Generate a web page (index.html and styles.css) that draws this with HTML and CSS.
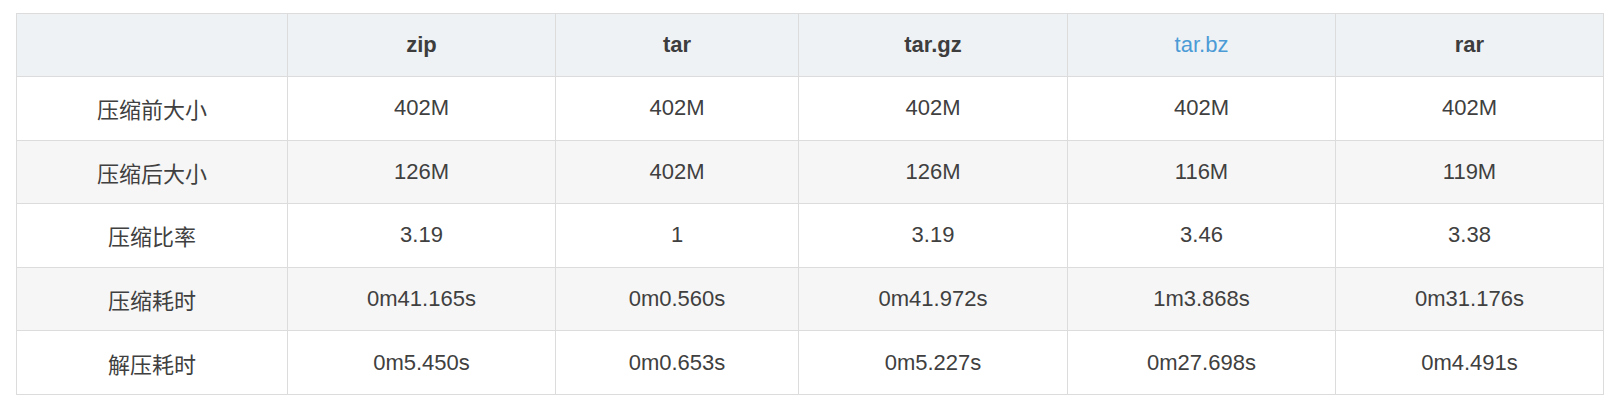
FILE: index.html
```html
<!DOCTYPE html>
<html lang="zh">
<head>
<meta charset="utf-8">
<link rel="stylesheet" href="styles.css">
</head>
<body>
<div class="wrap">
<table class="cmp">
  <colgroup>
    <col class="c1"><col class="c2"><col class="c3"><col class="c4"><col class="c5"><col class="c6">
  </colgroup>
  <thead>
    <tr><th></th><th>zip</th><th>tar</th><th>tar.gz</th><th><a class="lnk" href="#">tar.bz</a></th><th>rar</th></tr>
  </thead>
  <tbody>
    <tr><td>压缩前大小</td><td>402M</td><td>402M</td><td>402M</td><td>402M</td><td>402M</td></tr>
    <tr><td>压缩后大小</td><td>126M</td><td>402M</td><td>126M</td><td>116M</td><td>119M</td></tr>
    <tr><td>压缩比率</td><td>3.19</td><td>1</td><td>3.19</td><td>3.46</td><td>3.38</td></tr>
    <tr><td>压缩耗时</td><td>0m41.165s</td><td>0m0.560s</td><td>0m41.972s</td><td>1m3.868s</td><td>0m31.176s</td></tr>
    <tr><td>解压耗时</td><td>0m5.450s</td><td>0m0.653s</td><td>0m5.227s</td><td>0m27.698s</td><td>0m4.491s</td></tr>
  </tbody>
</table>
</div>
</body>
</html>
```
FILE: styles.css
```css
html, body {
  margin: 0;
  padding: 0;
  background: #ffffff;
}
.wrap {
  padding: 13px 16px 0 16px;
}
.cmp {
  border-collapse: collapse;
  table-layout: fixed;
  width: 1588px;
  font-family: "Liberation Sans", Arial, "Noto Sans CJK SC", sans-serif;
  font-size: 22px;
  color: #404040;
}
.c1 { width: 271px; }
.c2 { width: 268px; }
.c3 { width: 243px; }
.c4 { width: 269px; }
.c5 { width: 268px; }
.c6 { width: 268px; }
.cmp th, .cmp td {
  border: 1px solid #dcdcdc;
  text-align: center;
  vertical-align: middle;
  padding: 0;
}
.cmp th {
  height: 62px;
  background: #eff2f5;
  font-weight: bold;
  color: #3d3d3d;
}
.cmp td {
  height: 62.6px;
}
.cmp tbody tr:nth-child(even) td {
  background: #f6f6f6;
}
.lnk {
  color: #4b9bd6;
  font-weight: normal;
  text-decoration: none;
}
```
